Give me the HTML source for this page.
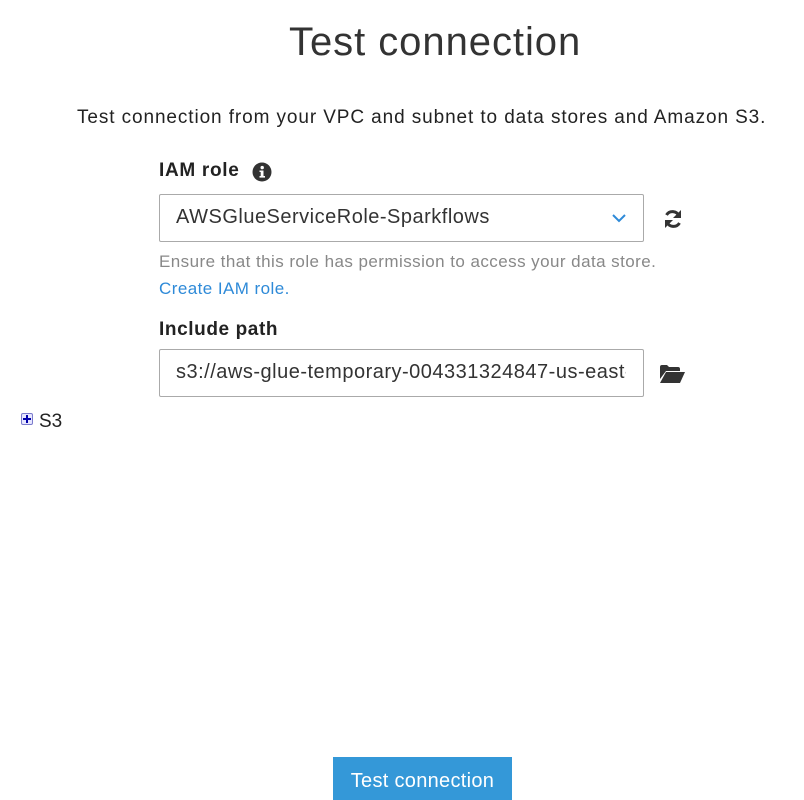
<!DOCTYPE html>
<html><head><style>
body{margin:0;width:804px;height:800px;background:#fff;font-family:"Liberation Sans",sans-serif;color:#333;position:relative;overflow:hidden}
.a{position:absolute;white-space:nowrap}
</style></head><body>
<div class="a" style="left:289px;top:20px;font-size:40px;letter-spacing:0.95px;color:#333">Test connection</div>
<div class="a" style="left:77px;top:107px;font-size:19px;letter-spacing:0.9px;color:#222">Test connection from your VPC and subnet to data stores and Amazon S3.</div>
<div class="a" style="left:159px;top:160px;font-size:19px;letter-spacing:0.7px;font-weight:bold;color:#222">IAM role</div>
<svg class="a" style="left:252px;top:162px" width="20" height="20" viewBox="0 0 20 20"><circle cx="10" cy="10" r="9.5" fill="#333"/><rect x="8.7" y="8.5" width="2.8" height="7" fill="#fff"/><rect x="7.5" y="8.5" width="2" height="1.5" fill="#fff"/><rect x="7.5" y="14" width="5.5" height="1.6" fill="#fff"/><circle cx="10.2" cy="5.6" r="1.7" fill="#fff"/></svg>
<div class="a" style="left:159px;top:194px;width:483px;height:46px;border:1px solid #aaa;border-radius:2px"></div>
<div class="a" style="left:176px;top:206px;font-size:20px;letter-spacing:0.5px;color:#333">AWSGlueServiceRole-Sparkflows</div>
<svg class="a" style="left:611px;top:212px" width="16" height="12" viewBox="0 0 16 12"><path d="M2 3l6 6 6-6" stroke="#2e8ad8" stroke-width="2" fill="none"/></svg>
<svg class="a" style="left:662px;top:208px" width="22" height="22" viewBox="0 0 22 22"><path d="M17 8A7 7 0 0 0 4.5 7" stroke="#333" stroke-width="3" fill="none"/><path d="M19 2v8h-8z" fill="#333"/><path d="M5 14A7 7 0 0 0 17.5 15" stroke="#333" stroke-width="3" fill="none"/><path d="M3 20v-8h8z" fill="#333"/></svg>
<div class="a" style="left:159px;top:252px;font-size:17px;letter-spacing:0.44px;color:#888">Ensure that this role has permission to access your data store.</div>
<div class="a" style="left:159px;top:279px;font-size:17px;letter-spacing:0.44px;color:#2e8ad8">Create IAM role.</div>
<div class="a" style="left:159px;top:319px;font-size:19px;letter-spacing:0.6px;font-weight:bold;color:#222">Include path</div>
<div class="a" style="left:159px;top:349px;width:483px;height:46px;border:1px solid #aaa;border-radius:2px;overflow:hidden"><div class="a" style="left:16px;top:11px;font-size:20px;letter-spacing:0.5px;color:#333;width:450px;overflow:hidden">s3://aws-glue-temporary-004331324847-us-east-1</div></div>
<svg class="a" style="left:660px;top:365px" width="25" height="18" viewBox="0 0 25 18"><path d="M0 2a2 2 0 0 1 2-2h5l2 2h9a2 2 0 0 1 2 2v2H6L0 14z" fill="#333"/><path d="M6 7h19l-5 11H0z" fill="#333"/></svg>
<div class="a" style="left:21px;top:413px;width:12px;height:12px;border:1px solid #7b7bcc;background:#e6e6ff;border-radius:2px;box-sizing:border-box"></div>
<div class="a" style="left:23px;top:418px;width:8px;height:2px;background:#00a"></div>
<div class="a" style="left:26px;top:415px;width:2px;height:8px;background:#00a"></div>
<div class="a" style="left:39px;top:411px;font-size:19px;color:#222">S3</div>
<div class="a" style="left:333px;top:757px;width:179px;height:43px;background:#3498d8"></div>
<div class="a" style="left:333px;top:770px;width:179px;text-align:center;font-size:20px;letter-spacing:0.3px;color:#fff">Test connection</div>
</body></html>
